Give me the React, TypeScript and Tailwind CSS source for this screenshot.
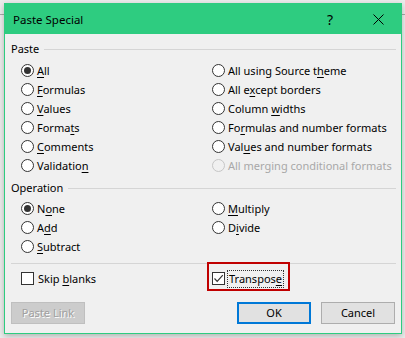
import React from "react";

const font = { fontFamily: '"Noto Sans", "Open Sans", sans-serif' };

function Label({ text, u, disabled }: { text: string; u?: number; disabled?: boolean }) {
  const parts =
    u === undefined ? (
      text
    ) : (
      <>
        {text.slice(0, u)}
        <span className="underline underline-offset-[2px] decoration-1">{text[u]}</span>
        {text.slice(u + 1)}
      </>
    );
  return (
    <span className={`whitespace-nowrap leading-[14px] ${disabled ? "text-[#a8a8a8]" : "text-black"}`}>{parts}</span>
  );
}

function Radio({ text, u, checked, disabled }: { text: string; u?: number; checked?: boolean; disabled?: boolean }) {
  return (
    <div className="h-[19px] flex items-center gap-[3px]">
      <span
        className={`w-[13px] h-[13px] rounded-full border flex items-center justify-center shrink-0 ${
          disabled ? "border-[#c6c6c6] bg-[#f0f0f0]" : "border-[#333333] bg-white"
        }`}
      >
        {checked && <span className="w-[7px] h-[7px] rounded-full bg-[#333333]" />}
      </span>
      <Label text={text} u={u} disabled={disabled} />
    </div>
  );
}

function GroupHeader({ text, className }: { text: string; className?: string }) {
  return (
    <div className={`h-[16px] flex items-center gap-[5px] pr-[5px] ${className ?? ""}`}>
      <span className="leading-[14px] text-black">{text}</span>
      <div className="flex-1 h-px bg-[#d5d5d5]" />
    </div>
  );
}

export default function App() {
  return (
    <div className="w-[405px] h-[338px] bg-[#ececec] relative overflow-hidden text-[11px]" style={font}>
      <div className="absolute left-0 right-0 top-[14px] h-px bg-[#a8a8a8]" />
      <div className="relative ml-[4px] mt-[3px] w-[398px] h-[331px] border border-[#2ecc80] bg-[#f0f0f0] flex flex-col shadow-[0_2px_6px_rgba(0,0,0,0.25)]">
        {/* title bar */}
        <div className="h-[31px] -mt-px -mx-px bg-[#2ecc80] flex items-center shrink-0">
          <span className="ml-[9px] mt-[3px] text-[11.5px] text-black leading-none">Paste Special</span>
          <span className="ml-auto mt-[2px] text-[14px] text-black leading-none mr-[40px]">?</span>
          <svg width="11" height="11" viewBox="0 0 11 11" className="mr-[18px] mt-[2px]">
            <path d="M0.5 0.5 L10.5 10.5 M10.5 0.5 L0.5 10.5" stroke="#000" strokeWidth="1" />
          </svg>
        </div>

        <div className="flex flex-col pl-[6px] pt-[7px]">
          <GroupHeader text="Paste" />
          <div className="grid grid-cols-[191px_1fr] pl-[10px] mt-[4px]">
            <div className="flex flex-col">
              <Radio text="All" u={0} checked />
              <Radio text="Formulas" u={0} />
              <Radio text="Values" u={0} />
              <Radio text="Formats" u={5} />
              <Radio text="Comments" u={0} />
              <Radio text="Validation" u={9} />
            </div>
            <div className="flex flex-col">
              <Radio text="All using Source theme" u={18} />
              <Radio text="All except borders" u={5} />
              <Radio text="Column widths" u={7} />
              <Radio text="Formulas and number formats" u={2} />
              <Radio text="Values and number formats" u={3} />
              <Radio text="All merging conditional formats" disabled />
            </div>
          </div>

          <GroupHeader text="Operation" className="mt-[5px]" />
          <div className="grid grid-cols-[191px_1fr] pl-[10px] mt-[3px]">
            <div className="flex flex-col">
              <Radio text="None" u={1} checked />
              <Radio text="Add" u={1} />
              <Radio text="Subtract" u={0} />
            </div>
            <div className="flex flex-col">
              <Radio text="Multiply" u={0} />
              <Radio text="Divide" u={1} />
            </div>
          </div>

          <div className="mt-[7px] mr-[5px] h-px bg-[#d5d5d5]" />

          <div className="grid grid-cols-[191px_1fr] pl-[10px] mt-[5px]">
            <div className="h-[19px] flex items-center gap-[4px]">
              <span className="w-[13px] h-[13px] border border-[#333333] bg-white shrink-0" />
              <Label text="Skip blanks" u={5} />
            </div>
            <div className="h-[19px] flex items-center gap-[2px] relative">
              <span className="w-[13px] h-[13px] border border-[#333333] bg-white shrink-0 flex items-center justify-center">
                <svg width="11" height="11" viewBox="0 0 11 11">
                  <path d="M1.5 5.5 L4.2 8.3 L9.8 2.2" stroke="#333" strokeWidth="1.2" fill="none" />
                </svg>
              </span>
              <span className="border border-dotted border-[#333] px-px leading-[12px] py-px">
                <Label text="Transpose" u={8} />
              </span>
              <div className="absolute left-[-5px] top-[-7px] w-[83px] h-[29px] border-2 border-[#c00000]" />
            </div>
          </div>
        </div>

        <div className="flex items-center mt-[14px] px-[6px]">
          <div className="w-[74px] h-[22px] border border-[#bfbfbf] bg-[#cccccc] flex items-center justify-center text-[#a0a0a0] [text-shadow:1px_1px_0_#fff]">
            Paste Link
          </div>
          <div className="ml-auto w-[74px] h-[22px] border-2 border-[#0078d7] bg-[#e1e1e1] flex items-center justify-center text-black">
            OK
          </div>
          <div className="ml-[10px] w-[74px] h-[22px] border border-[#adadad] bg-[#e1e1e1] flex items-center justify-center text-black">
            Cancel
          </div>
        </div>
      </div>
    </div>
  );
}
